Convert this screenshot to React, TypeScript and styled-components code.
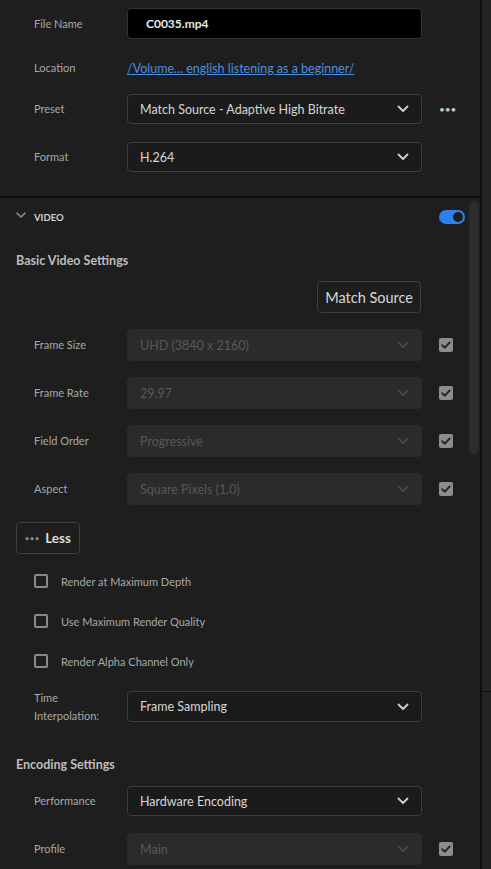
import React, { FC, useState } from "react";
import styled, { createGlobalStyle } from "styled-components";

const colors = {
  bg: "#1e1e1e",
  strip: "#232323",
  line: "#0e0e0e",
  label: "#a8a8a8",
  text: "#d6d6d6",
  border: "#3d3d3d",
  disabledBg: "#2b2b2b",
  disabledText: "#585858",
  blue: "#2f80ed",
  link: "#4b8fe2",
};

const GlobalStyle = createGlobalStyle`
  html, body {
    margin: 0;
    padding: 0;
    background: ${colors.bg};
  }
  body {
    font-family: Lato, "Open Sans", "Liberation Sans", sans-serif;
  }
`;

const Chevron: FC<{ disabled?: boolean }> = ({ disabled }) => (
  <svg width="12" height="8" viewBox="0 0 12 8">
    <path
      d="M1.5 1.5 L6 6 L10.5 1.5"
      fill="none"
      stroke={disabled ? "#474747" : "#d0d0d0"}
      strokeWidth="1.8"
      strokeLinecap="round"
      strokeLinejoin="round"
    />
  </svg>
);

const CheckMark: FC = () => (
  <svg width="10" height="8" viewBox="0 0 10 8">
    <path
      d="M1.2 4.2 L3.8 6.6 L8.8 1.4"
      fill="none"
      stroke="#222"
      strokeWidth="1.9"
      strokeLinecap="round"
      strokeLinejoin="round"
    />
  </svg>
);

const App: FC = () => {
  const [videoOn, setVideoOn] = useState(true);
  const [opts, setOpts] = useState([false, false, false]);

  const basic = [
    { label: "Frame Size", value: "UHD (3840 x 2160)" },
    { label: "Frame Rate", value: "29.97" },
    { label: "Field Order", value: "Progressive" },
    { label: "Aspect", value: "Square Pixels (1.0)" },
  ];

  const options = [
    "Render at Maximum Depth",
    "Use Maximum Render Quality",
    "Render Alpha Channel Only",
  ];

  return (
    <>
      <GlobalStyle />
      <Page>
        <Main>
          <TopSection>
            <Row $height={31}>
              <Label>File Name</Label>
              <NameInput>C0035.mp4</NameInput>
            </Row>
            <Row $height={24} $top={17}>
              <Label>Location</Label>
              <LocationLink>/Volume... english listening as a beginner/</LocationLink>
            </Row>
            <Row $height={30} $top={14}>
              <Label>Preset</Label>
              <Select>
                <SelectText>Match Source - Adaptive High Bitrate</SelectText>
                <Chevron />
              </Select>
              <Extra>
                <MoreDots>•••</MoreDots>
              </Extra>
            </Row>
            <Row $height={30} $top={18}>
              <Label>Format</Label>
              <Select>
                <SelectText>H.264</SelectText>
                <Chevron />
              </Select>
            </Row>
          </TopSection>

          <VideoSection>
            <VideoContent>
              <SectionHeader>
                <HeaderChevron>
                  <svg width="10" height="7" viewBox="0 0 10 7">
                    <path
                      d="M1 1.2 L5 5 L9 1.2"
                      fill="none"
                      stroke="#8a8a8a"
                      strokeWidth="1.6"
                      strokeLinecap="round"
                    />
                  </svg>
                </HeaderChevron>
                <HeaderTitle>VIDEO</HeaderTitle>
                <Toggle $on={videoOn} onClick={() => setVideoOn(!videoOn)}>
                  <Knob />
                </Toggle>
              </SectionHeader>

              <GroupTitle $top={21}>Basic Video Settings</GroupTitle>

              <ButtonRow>
                <GhostButton>Match Source</GhostButton>
              </ButtonRow>

              {basic.map((item) => (
                <Row key={item.label} $height={32} $top={16}>
                  <Label>{item.label}</Label>
                  <Select $disabled>
                    <SelectText $disabled>{item.value}</SelectText>
                    <Chevron disabled />
                  </Select>
                  <Extra>
                    <CheckedBox>
                      <CheckMark />
                    </CheckedBox>
                  </Extra>
                </Row>
              ))}

              <LessButton>
                <LessDots>•••</LessDots>
                Less
              </LessButton>

              <OptionList>
                {options.map((o, i) => (
                  <OptionRow
                    key={o}
                    onClick={() =>
                      setOpts(opts.map((v, j) => (j === i ? !v : v)))
                    }
                  >
                    <EmptyBox>{opts[i] && <CheckMark />}</EmptyBox>
                    <OptionText>{o}</OptionText>
                  </OptionRow>
                ))}
              </OptionList>

              <Row $height={31} $top={23}>
                <Label $multi>
                  Time
                  <br />
                  Interpolation:
                </Label>
                <Select>
                  <SelectText>Frame Sampling</SelectText>
                  <Chevron />
                </Select>
              </Row>

              <GroupTitle $top={35}>Encoding Settings</GroupTitle>

              <Row $height={30} $top={13}>
                <Label>Performance</Label>
                <Select>
                  <SelectText>Hardware Encoding</SelectText>
                  <Chevron />
                </Select>
              </Row>

              <Row $height={32} $top={17}>
                <Label>Profile</Label>
                <Select $disabled>
                  <SelectText $disabled>Main</SelectText>
                  <Chevron disabled />
                </Select>
                <Extra>
                  <CheckedBox>
                    <CheckMark />
                  </CheckedBox>
                </Extra>
              </Row>
            </VideoContent>

            <ScrollTrack>
              <ScrollThumb />
            </ScrollTrack>
          </VideoSection>
        </Main>
        <SideStrip>
          <StripTop />
        </SideStrip>
      </Page>
    </>
  );
};

export default App;

const Page = styled.div`
  display: flex;
  flex-direction: row;

  width: 491px;
  height: 869px;
  overflow: hidden;

  background-color: ${colors.bg};
`;

const Main = styled.div`
  display: flex;
  flex-direction: column;

  width: 480px;
  border-right: 2px solid ${colors.line};
`;

const SideStrip = styled.div`
  flex: 1;

  background-color: ${colors.strip};
`;

const StripTop = styled.div`
  height: 691px;
  border-bottom: 1px solid ${colors.line};
`;

const TopSection = styled.div`
  display: flex;
  flex-direction: column;

  height: 188px;
  padding-top: 8px;

  border-bottom: 2px solid ${colors.line};
`;

const Row = styled.div<{ $height: number; $top?: number }>`
  display: flex;
  align-items: center;
  flex-shrink: 0;

  height: ${(p) => p.$height}px;
  margin-top: ${(p) => p.$top ?? 0}px;
  padding-left: 34px;
`;

const Label = styled.div<{ $multi?: boolean }>`
  width: 93px;
  flex-shrink: 0;

  font-size: 11px;
  line-height: ${(p) => (p.$multi ? "18px" : "14px")};
  color: ${colors.label};
`;

const NameInput = styled.div`
  display: flex;
  align-items: center;

  width: 295px;
  height: 100%;
  box-sizing: border-box;
  padding-left: 18px;

  border: 1px solid #333;
  border-radius: 4px;
  background-color: #000;

  font-size: 12px;
  font-weight: 700;
  color: #e8e8e8;
`;

const LocationLink = styled.a`
  font-size: 12.5px;
  color: ${colors.link};
  text-decoration: underline;
  cursor: pointer;
`;

const Select = styled.div<{ $disabled?: boolean }>`
  display: flex;
  align-items: center;
  justify-content: space-between;
  flex-shrink: 0;

  width: 295px;
  height: 100%;
  box-sizing: border-box;
  padding: 0 12px 0 12px;

  border: 1px solid ${(p) => (p.$disabled ? colors.disabledBg : colors.border)};
  border-radius: 4px;
  background-color: ${(p) => (p.$disabled ? colors.disabledBg : "#1b1b1b")};
`;

const SelectText = styled.span<{ $disabled?: boolean }>`
  font-size: 12.5px;
  color: ${(p) => (p.$disabled ? colors.disabledText : colors.text)};
`;

const Extra = styled.div`
  display: flex;
  align-items: center;

  margin-left: 17px;
`;

const MoreDots = styled.span`
  font-size: 10px;
  color: #c8c8c8;
`;

const CheckedBox = styled.div`
  display: flex;
  align-items: center;
  justify-content: center;

  width: 14px;
  height: 14px;

  border-radius: 2px;
  background-color: #8d8d8d;
`;

const VideoSection = styled.div`
  display: flex;
  flex-direction: row;
  flex: 1;
`;

const VideoContent = styled.div`
  display: flex;
  flex-direction: column;
  flex: 1;
`;

const SectionHeader = styled.div`
  display: flex;
  align-items: center;

  height: 30px;
  margin-top: 4px;
  padding-left: 16px;
`;

const HeaderChevron = styled.div`
  display: flex;
  margin-right: 8px;
  margin-top: -4px;
`;

const HeaderTitle = styled.span`
  flex: 1;

  font-size: 9.5px;
  font-weight: 700;
  color: #d0d0d0;
`;

const Toggle = styled.div<{ $on: boolean }>`
  display: flex;
  align-items: center;
  justify-content: ${(p) => (p.$on ? "flex-end" : "flex-start")};

  width: 26px;
  height: 14px;
  box-sizing: border-box;
  padding: 0 2px;
  margin-right: 4px;

  border-radius: 7px;
  background-color: ${(p) => (p.$on ? colors.blue : "#555")};
  cursor: pointer;
`;

const Knob = styled.div`
  width: 10px;
  height: 10px;

  border-radius: 50%;
  background-color: #1c1c1c;
`;

const GroupTitle = styled.div<{ $top: number }>`
  margin-top: ${(p) => p.$top}px;
  padding-left: 16px;

  font-size: 12.5px;
  font-weight: 700;
  line-height: 16px;
  color: #bdbdbd;
`;

const ButtonRow = styled.div`
  display: flex;
  justify-content: flex-end;

  margin-top: 12px;
  padding-right: 48px;
`;

const GhostButton = styled.button`
  height: 32px;
  padding: 0 7px;

  border: 1px solid #3f3f3f;
  border-radius: 4px;
  background-color: transparent;

  font-family: Lato, "Open Sans", "Liberation Sans", sans-serif;
  font-size: 14.5px;
  color: #d8d8d8;
`;

const LessButton = styled.button`
  display: flex;
  align-items: center;
  align-self: flex-start;

  height: 32px;
  margin-top: 17px;
  margin-left: 16px;
  padding: 0 8px;

  border: 1px solid #3f3f3f;
  border-radius: 4px;
  background-color: transparent;

  font-family: Lato, "Open Sans", "Liberation Sans", sans-serif;
  font-size: 13.5px;
  font-weight: 700;
  color: #dcdcdc;
`;

const LessDots = styled.span`
  margin-right: 5px;

  font-size: 7px;
  letter-spacing: 1px;
  color: #8a8a8a;
`;

const OptionList = styled.div`
  display: flex;
  flex-direction: column;
  gap: 26px;

  margin-top: 20px;
  padding-left: 34px;
`;

const OptionRow = styled.div`
  display: flex;
  align-items: center;

  height: 14px;
  cursor: pointer;
`;

const EmptyBox = styled.div`
  display: flex;
  align-items: center;
  justify-content: center;

  width: 10px;
  height: 10px;
  margin-right: 13px;

  border: 2px solid #8a8a8a;
  border-radius: 2px;
`;

const OptionText = styled.span`
  font-size: 11px;
  color: ${colors.label};
`;

const ScrollTrack = styled.div`
  width: 10px;
  padding-top: 3px;
  margin-right: 1px;
`;

const ScrollThumb = styled.div`
  height: 253px;

  border-radius: 5px;
  background-color: #2c2c2c;
`;
